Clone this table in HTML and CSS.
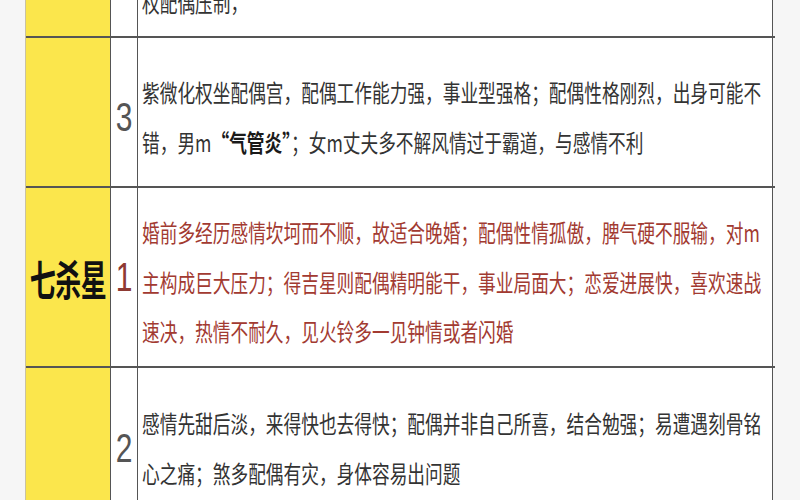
FILE: index.html
```html
<!DOCTYPE html>
<html lang="zh">
<head>
<meta charset="utf-8">
<link rel="stylesheet" href="styles.css">
</head>
<body>
<div class="table">
  <div class="row r0">
    <div class="c1"></div>
    <div class="c2"></div>
    <div class="c3 top"><div class="txt">权配偶压制，</div></div>
  </div>
  <div class="row r3">
    <div class="c1"></div>
    <div class="c2"><span class="num">3</span></div>
    <div class="c3"><div class="txt">紫微化权坐配偶宫，配偶工作能力强，事业型强格；配偶性格刚烈，出身可能不<br>错，男m<b>“气管炎”</b>；女m丈夫多不解风情过于霸道，与感情不利</div></div>
  </div>
  <div class="row r1">
    <div class="c1"><span class="star">七杀星</span></div>
    <div class="c2"><span class="num red">1</span></div>
    <div class="c3"><div class="txt red">婚前多经历感情坎坷而不顺，故适合晚婚；配偶性情孤傲，脾气硬不服输，对m<br>主构成巨大压力；得吉星则配偶精明能干，事业局面大；恋爱进展快，喜欢速战<br>速决，热情不耐久，见火铃多一见钟情或者闪婚</div></div>
  </div>
  <div class="row r2">
    <div class="c1"></div>
    <div class="c2"><span class="num">2</span></div>
    <div class="c3"><div class="txt">感情先甜后淡，来得快也去得快；配偶并非自己所喜，结合勉强；易遭遇刻骨铭<br>心之痛；煞多配偶有灾，身体容易出问题</div></div>
  </div>
</div>
</body>
</html>
```
FILE: styles.css
```css
html, body {
  margin: 0;
  padding: 0;
  background: #f6f6f6;
  overflow: hidden;
}
body {
  width: 800px;
  height: 500px;
  font-family: "Noto Sans CJK SC", "Noto Sans", sans-serif;
}
.table {
  margin-left: 25px;
  width: 749px;
  border-left: 1px solid #c9c2a0;
}
.row {
  display: flex;
  border-bottom: 2px solid #555;
}
.r0 { height: 36px; }
.r3 { height: 148px; }
.r1 { height: 178px; }
.r2 { height: 150px; border-bottom: none; }
.c1 {
  width: 84px;
  background: #fbe64c;
  border-right: 1px solid #555;
  display: flex;
  align-items: center;
  justify-content: center;
}
.c2 {
  width: 26px;
  background: #fff;
  border-right: 1px solid #555;
  display: flex;
  align-items: center;
  justify-content: center;
}
.c3 {
  width: 635px;
  background: #fff;
  border-right: 1px solid #555;
  display: flex;
  align-items: center;
  padding-left: 4px;
  box-sizing: border-box;
}
.r3 .c2, .r3 .c3 { padding-top: 10px; }
.r1 .c3 { padding-top: 10px; }
.r2 .c2, .r2 .c3 { padding-top: 10px; }
.c3.top {
  align-items: flex-start;
}
.top .txt {
  margin-top: -16px;
}
.txt {
  font-size: 17.7px;
  line-height: 37.5px;
  color: #333;
  white-space: nowrap;
  transform: scaleY(1.32);
}
.txt b {
  font-weight: 700;
  color: #1a1a1a;
}
.red {
  color: #a23a31;
}
.num {
  font-family: "Liberation Sans", Arial, sans-serif;
  font-size: 30px;
  line-height: 30px;
  color: #555;
  display: inline-block;
  transform: scaleY(1.35);
}
.num.red {
  color: #8e3a33;
}
.star {
  font-size: 26px;
  font-weight: 700;
  color: #111;
  display: inline-block;
  letter-spacing: -0.5px;
  transform: scaleY(1.6);
}
```
